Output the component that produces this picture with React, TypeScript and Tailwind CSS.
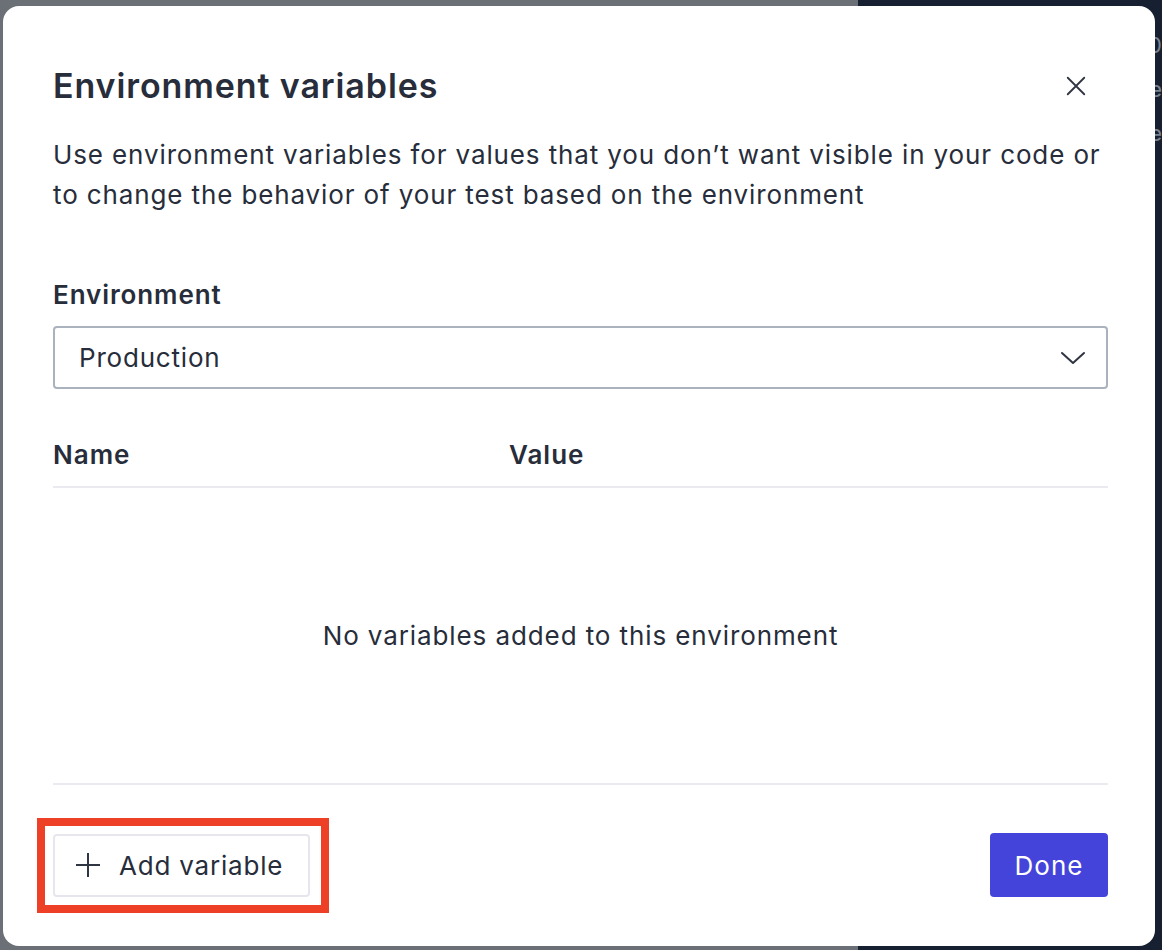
import React from "react";

const font = { fontFamily: "Inter, 'Noto Sans', sans-serif" };

const App = () => {
  return (
    <div className="relative w-[1162px] h-[950px] overflow-hidden flex" style={font}>
      {/* page behind the overlay */}
      <div className="w-[858px] h-full bg-[#6b6f76]"></div>
      <div className="flex-1 h-full bg-[#172030] flex flex-col items-end pt-[28px] gap-[10px] text-[22px] leading-[34px] text-[#7d8491] overflow-hidden">
        <div className="whitespace-nowrap">Status 200</div>
        <div className="whitespace-nowrap">Name</div>
        <div className="whitespace-nowrap">Value</div>
      </div>

      {/* modal */}
      <div className="absolute left-[3px] top-[6px] w-[1152px] h-[940px] bg-white rounded-2xl pl-[50px] pr-[47px] pt-[60px] pb-[48px] flex flex-col text-[#272d3a]">
        <div className="flex items-center justify-between">
          <h2 className="text-[34px] leading-[40px] font-semibold tracking-[0.9px]">Environment variables</h2>
          <button className="w-[24px] h-[24px] mr-[20px] flex items-center justify-center text-[#2f3542]">
            <svg width="22" height="22" viewBox="0 0 24 24" fill="none" stroke="currentColor" strokeWidth="2" strokeLinecap="round">
              <path d="M3 3 L21 21 M21 3 L3 21" />
            </svg>
          </button>
        </div>
        <p className="mt-[29px] text-[26px] leading-[40px] tracking-[0.88px]">
          Use environment variables for values that you don’t want visible in your code or to change the behavior of your test based on the environment
        </p>

        <label className="mt-[60px] text-[26px] leading-[40px] font-semibold tracking-[0.9px]">Environment</label>
        <div className="mt-[11px] h-[63px] border-2 border-[#aab2be] rounded-[4px] flex items-center justify-between pl-[24px] pr-[20px]">
          <span className="text-[26px] tracking-[0.8px]">Production</span>
          <svg width="26" height="16" viewBox="0 0 26 16" fill="none" stroke="#2f3542" strokeWidth="2" strokeLinecap="round" strokeLinejoin="round">
            <path d="M2 3 L13 13 L24 3" />
          </svg>
        </div>

        <div className="mt-[46px] grid grid-cols-[456px_1fr] text-[26px] leading-[40px] font-semibold tracking-[1px] pb-[11px] border-b-2 border-[#eaeaf0]">
          <div>Name</div>
          <div>Value</div>
        </div>
        <div className="h-[297px] flex items-center justify-center border-b-2 border-[#eaeaf0] text-[26px] tracking-[0.9px]">
          No variables added to this environment
        </div>

        <div className="mt-[48px] flex items-center justify-between">
          <div className="relative">
            <span className="absolute left-[-16px] top-[-16px] right-[-19px] bottom-[-16px] border-8 border-[#ee4027] pointer-events-none"></span>
            <button className="h-[63px] w-[257px] border-2 border-[#e6e7ee] rounded-[4px] flex items-center pl-[20px] gap-[18px] text-[26px] tracking-[0.8px] text-[#272d3a]">
              <svg width="26" height="26" viewBox="0 0 26 26" fill="none" stroke="#2f3542" strokeWidth="2">
                <path d="M13 1 V25 M1 13 H25" />
              </svg>
              <span>Add variable</span>
            </button>
          </div>
          <button className="h-[64px] w-[118px] bg-[#4444da] rounded-[4px] text-white text-[26px] tracking-[1px]">Done</button>
        </div>
      </div>
    </div>
  );
};

export default App;
